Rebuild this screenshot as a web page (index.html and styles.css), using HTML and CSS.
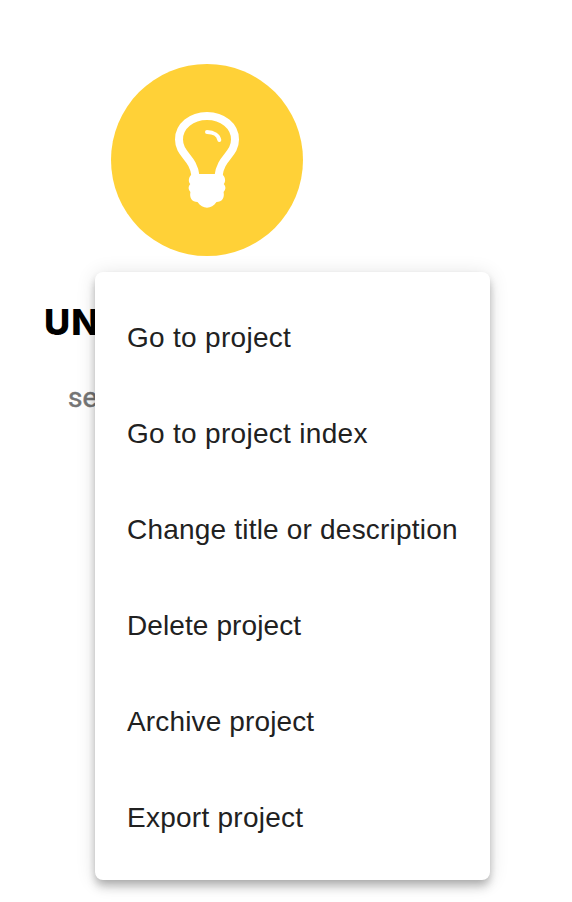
FILE: index.html
```html
<!DOCTYPE html>
<html lang="en">
<head>
<meta charset="utf-8">
<title>Projects</title>
<link rel="stylesheet" href="styles.css">
</head>
<body>
<main class="project">
  <div class="avatar">
    <svg viewBox="0 0 192 192" aria-hidden="true">
      <path class="glass" d="M84.5 112C82.5 93 68 91 68 75.500C68 62 80.500 52 96 52S124 62 124 75.500C124 91 109.500 93 107.500 112"/>
      <path class="shine" d="M96 68C103 68 107.500 71.500 108.300 76"/>
      <path class="cap" d="M81 110H111C114.500 113 115 117.500 112.800 120C115 122.500 115 125.500 112.600 128C113.800 134 111 138 105.500 138C100.500 145.600 91.500 145.600 86.500 138C81 138 78.200 134 79.400 128C77 125.500 77 122.500 79.200 120C77 117.500 77.500 113 81 110Z"/>
    </svg>
  </div>
  <h1 class="title">UN</h1>
  <p class="description">se</p>
</main>
<ul class="menu">
  <li><span class="go">Go to project</span></li>
  <li><span class="index">Go to project index</span></li>
  <li><span class="change">Change title or description</span></li>
  <li><span class="delete">Delete project</span></li>
  <li><span class="archive">Archive project</span></li>
  <li><span class="export">Export project</span></li>
</ul>
</body>
</html>
```
FILE: styles.css
```css
* { box-sizing: border-box; }
body { margin: 0; background: #fff; min-height: 902px; overflow: hidden; }
.project { width: 414px; padding-top: 64px; }
.avatar { width: 192px; height: 192px; margin: 0 auto; border-radius: 50%; background: #ffd137; }
.avatar svg { display: block; width: 100%; height: 100%; }
.glass { fill: none; stroke: #fff; stroke-width: 8; }
.shine { fill: none; stroke: #fff; stroke-width: 4; stroke-linecap: round; }
.cap { fill: #fff; }
.title { margin: 44px 0 0 44px; font: 800 36px/44px Inter, sans-serif; letter-spacing: 1px; color: #000; }
.description { margin: 38px 0 0 68px; font: 28px/32px Roboto, sans-serif; color: #757575; -webkit-text-stroke: .5px #757575; }
.menu {
  position: absolute; left: 95px; top: 272px; width: 395px; height: 608px;
  margin: 0; padding: 18px 0 14px; list-style: none; background: #fff; border-radius: 8px;
  box-shadow: 0 4px 8px -2px rgba(0,0,0,.2), 0 8px 10px rgba(0,0,0,.14), 0 2px 20px rgba(0,0,0,.12);
}
.menu li {
  height: 96px; padding: 0 32px; display: flex; align-items: center; white-space: nowrap;
  font: 28px/32px "Liberation Sans", Arial, sans-serif; color: #212121;
}
.go, .index { letter-spacing: .3px; }
.change { letter-spacing: .2px; }
.delete { letter-spacing: .1px; }
.archive { letter-spacing: .14px; }
.export { letter-spacing: .26px; }
```
